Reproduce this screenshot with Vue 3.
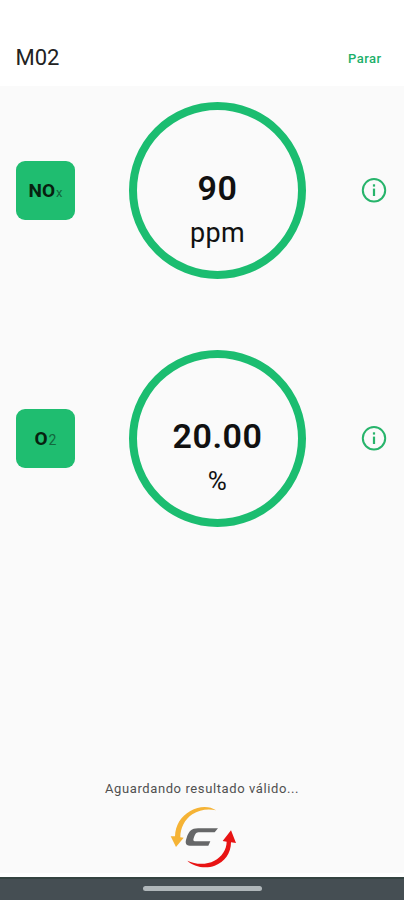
<script setup>
const gauges = [
  { id: 'nox', symbol: 'NO', sub: 'x', value: '90', unit: 'ppm' },
  { id: 'o2', symbol: 'O', sub: '2', value: '20.00', unit: '%' },
]
</script>

<template>
  <div class="screen">
    <header class="bar">
      <h1 class="title">M02</h1>
      <button class="stop">Parar</button>
    </header>

    <main class="content">
      <section v-for="g in gauges" :key="g.id" class="row">
        <div class="badge"><b>{{ g.symbol }}</b><span :class="['sub', g.id]">{{ g.sub }}</span></div>
        <div class="ring">
          <div class="value">{{ g.value }}</div>
          <div :class="['unit', g.id]">{{ g.unit }}</div>
        </div>
        <svg class="info" viewBox="0 0 26 26">
          <circle cx="13" cy="13.3" r="11.2" fill="none" stroke="currentColor" stroke-width="2" />
          <rect x="11.9" y="7.3" width="2.2" height="2.3" fill="currentColor" />
          <rect x="11.9" y="11.6" width="2.2" height="7.4" fill="currentColor" />
        </svg>
      </section>

      <footer class="status">
        <p class="message">Aguardando resultado válido...</p>
        <svg class="logo" viewBox="30 15 201 195">
          <path fill="#f5b335" d="M168 31 C150 18 118 17 91 33 C62 49 46 76 45 109 L32 109 L48 141 L71 113 L61 112 C61 84 74 58 97 43 C118 29 144 26 168 31 Z" />
          <path fill="#e81313" d="M82 182 C99 199 135 208 164 197 C194 186 213 160 213 127 L228 129 L213 91 L188 123 L200 125 C200 148 185 171 163 182 C139 195 107 194 82 182 Z" />
          <path fill="#666768" d="M174 85 L114 85 C94 85 87 94 80 113 C73 132 79 137 95 137 L145 137 L151 124 L107 124 C99 124 99 120 102 112 C106 101 109 97 119 97 L164 97 Z" />
        </svg>
      </footer>
    </main>

    <nav class="system"><span class="handle"></span></nav>
  </div>
</template>

<style>
body {
  background: #fff;
}
</style>

<style scoped>
.screen {
  display: flex;
  flex-direction: column;
  width: 404px;
  height: 900px;
  overflow: hidden;
  background: #fff;
  color: #111;
  font-family: Roboto, "Liberation Sans", sans-serif;
}
.bar {
  box-sizing: border-box;
  display: flex;
  align-items: center;
  justify-content: space-between;
  height: 86px;
  padding: 30px 22.5px 0 15.5px;
}
.title {
  margin: 0;
  font-size: 22px;
  font-weight: 400;
  line-height: 26px;
  color: #222;
}
.stop {
  border: 0;
  padding: 2px 0 0;
  background: none;
  color: #1cb069;
  font: 500 13px/16px Roboto, "Liberation Sans", sans-serif;
  letter-spacing: 0.45px;
}
.content {
  box-sizing: border-box;
  display: flex;
  flex-direction: column;
  gap: 71px;
  height: 787px;
  padding-top: 15.5px;
  background: #fafafa;
}
.row {
  display: grid;
  grid-template-columns: 59px 177px 26px;
  column-gap: 54px;
  align-items: center;
  height: 177px;
  padding: 0 16px;
}
.badge {
  display: flex;
  align-items: baseline;
  justify-content: center;
  height: 59px;
  border-radius: 9px;
  background: #1fbd70;
  color: #07210f;
  font-size: 19px;
  line-height: 59px;
  letter-spacing: 0;
}
.badge b {
  font-weight: 700;
}
.sub {
  margin-left: 1px;
  font-size: 13px;
  color: #12673d;
}
.sub.o2 {
  font-size: 14px;
}
.ring {
  box-sizing: border-box;
  height: 177px;
  padding-top: 57px;
  border: 8px solid #1bbd70;
  border-radius: 50%;
  text-align: center;
}
.value {
  font-size: 34px;
  font-weight: 600;
  line-height: 42px;
  letter-spacing: 0.5px;
}
.unit {
  font-size: 27px;
  line-height: 49px;
  letter-spacing: 0.3px;
}
.unit.o2 {
  font-size: 26px;
}
.info {
  width: 26px;
  height: 26px;
  margin-left: 1px;
  color: #27b46b;
}
.status {
  display: flex;
  flex-direction: column;
  align-items: center;
  margin-top: auto;
  padding-bottom: 3px;
}
.message {
  margin: 0 0 7px;
  font-size: 13px;
  line-height: 18px;
  letter-spacing: 0.6px;
  color: #505050;
}
.logo {
  width: 67px;
  height: 65px;
  margin-left: 3px;
}
.system {
  box-sizing: border-box;
  display: flex;
  justify-content: center;
  height: 23px;
  margin-top: 4px;
  padding-top: 7px;
  border-top: 2px solid #344341;
  background: #454e53;
}
.handle {
  width: 119px;
  height: 5px;
  border-radius: 3px;
  background: #b0b7ba;
}
</style>
